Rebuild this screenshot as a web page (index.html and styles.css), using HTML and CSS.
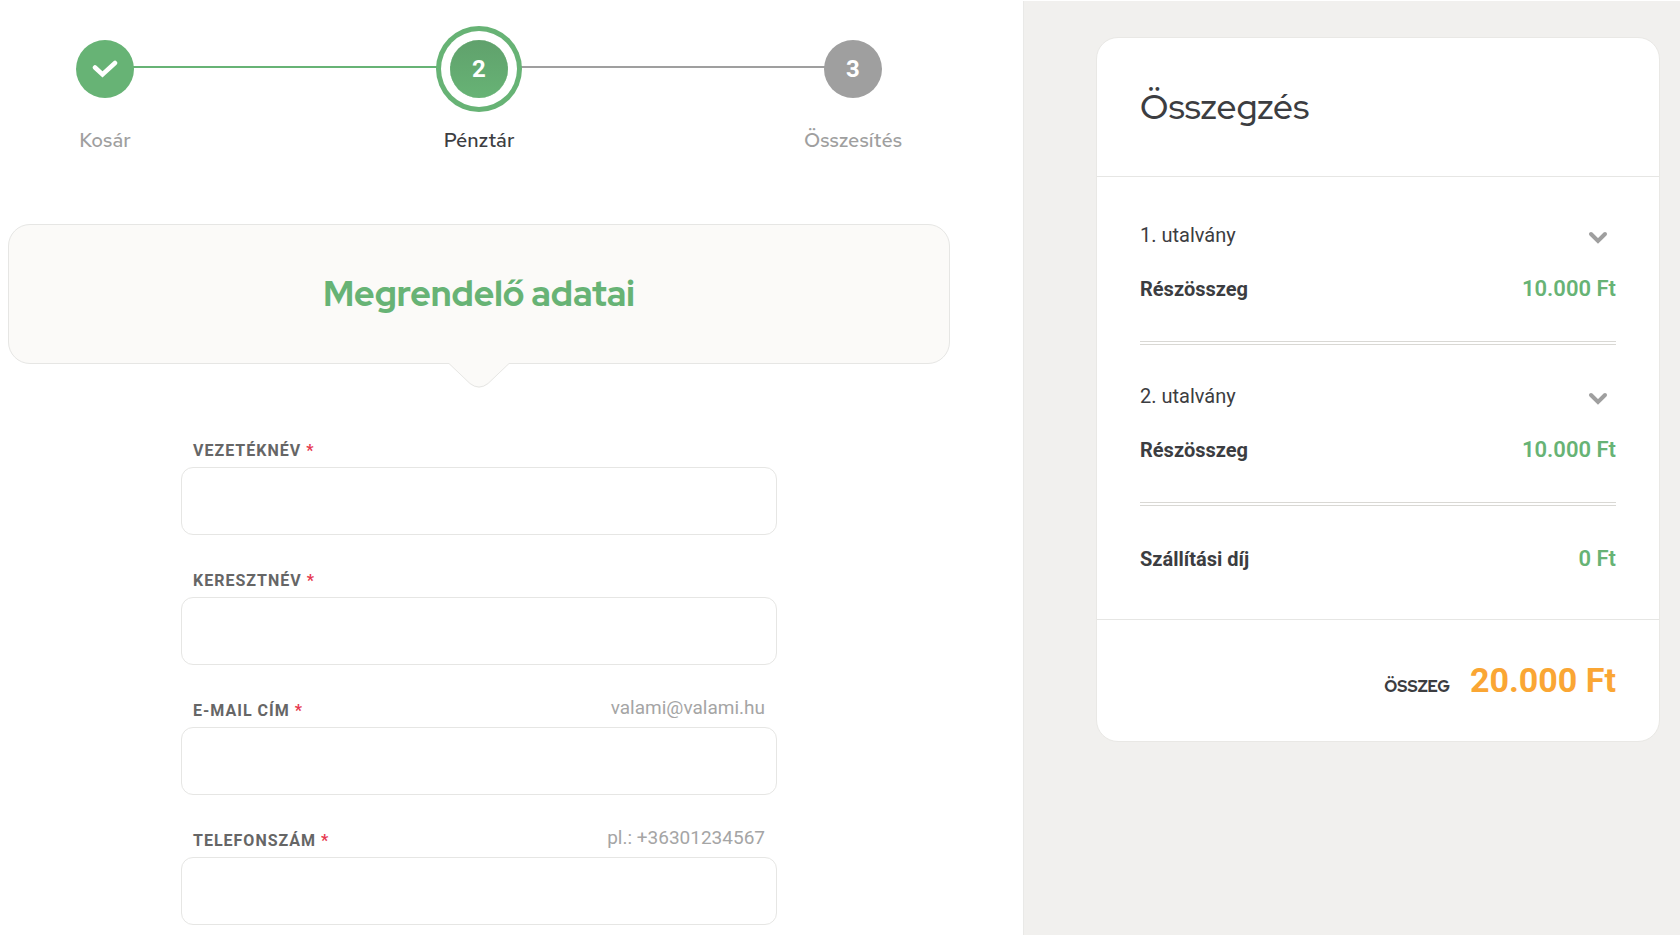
FILE: index.html
```html
<!DOCTYPE html>
<html lang="hu">
<head>
<meta charset="utf-8">
<meta name="viewport" content="width=device-width, initial-scale=1">
<title>Pénztár</title>
<link rel="stylesheet" href="styles.css">
</head>
<body>
<div class="page">
  <main class="checkout">
    <ol class="steps">
      <li class="step step-done">
        <span class="step-dot">
          <svg width="26" height="18" viewBox="0 0 26 18" fill="none" stroke="currentColor" stroke-width="4.500" stroke-linecap="round" stroke-linejoin="miter" aria-label="Kész"><path d="M3 7.500l7.500 7L23 3"/></svg>
        </span>
        <span class="step-label">Kosár</span>
      </li>
      <li class="step-line step-line-done" role="presentation"></li>
      <li class="step step-current" aria-current="step">
        <span class="step-dot">2</span>
        <span class="step-label">Pénztár</span>
      </li>
      <li class="step-line" role="presentation"></li>
      <li class="step">
        <span class="step-dot">3</span>
        <span class="step-label">Összesítés</span>
      </li>
    </ol>

    <header class="banner">
      <h1 class="banner-title">Megrendelő adatai</h1>
      <svg class="banner-arrow" width="60" height="26" viewBox="0 0 60 26" aria-hidden="true"><path class="arrow-fill" d="M0 0H60V1L38 22Q30 28 22 22L0 1Z"/><path class="arrow-edge" d="M0 0.500L21 20.500Q30 27.500 39 20.500L60 0.500"/></svg>
    </header>

    <form class="form">
      <div class="field">
        <div class="field-head"><label class="field-label" for="last">VEZETÉKNÉV <span class="required">*</span></label></div>
        <input class="field-input" id="last" type="text">
      </div>
      <div class="field">
        <div class="field-head"><label class="field-label" for="first">KERESZTNÉV <span class="required">*</span></label></div>
        <input class="field-input" id="first" type="text">
      </div>
      <div class="field">
        <div class="field-head"><label class="field-label" for="email">E-MAIL CÍM <span class="required">*</span></label><span class="field-hint" id="email-hint">valami@valami.hu</span></div>
        <input class="field-input" id="email" type="email" aria-describedby="email-hint">
      </div>
      <div class="field">
        <div class="field-head"><label class="field-label" for="phone">TELEFONSZÁM <span class="required">*</span></label><span class="field-hint" id="phone-hint">pl.: +36301234567</span></div>
        <input class="field-input" id="phone" type="tel" aria-describedby="phone-hint">
      </div>
    </form>
  </main>

  <aside class="sidebar">
    <section class="summary">
      <h2 class="summary-title">Összegzés</h2>
      <div class="summary-body">
        <div class="item">
          <div class="row"><span>1. utalvány</span>
            <button class="toggle" type="button" aria-label="1. utalvány részletei"><svg width="20" height="14" viewBox="0 0 20 14" fill="none" stroke="currentColor" stroke-width="4" stroke-linecap="round"><path d="M3 3l7 7 7-7"/></svg></button></div>
          <div class="row"><strong class="name">Részösszeg</strong><span class="price">10.000 Ft</span></div>
        </div>
        <div class="item">
          <div class="row"><span>2. utalvány</span>
            <button class="toggle" type="button" aria-label="2. utalvány részletei"><svg width="20" height="14" viewBox="0 0 20 14" fill="none" stroke="currentColor" stroke-width="4" stroke-linecap="round"><path d="M3 3l7 7 7-7"/></svg></button></div>
          <div class="row"><strong class="name">Részösszeg</strong><span class="price">10.000 Ft</span></div>
        </div>
        <div class="row shipping"><strong class="name">Szállítási díj</strong><span class="price">0 Ft</span></div>
      </div>
      <div class="total"><span class="total-label">ÖSSZEG</span><strong class="total-price">20.000 Ft</strong></div>
    </section>
  </aside>
</div>
</body>
</html>
```
FILE: styles.css
```css
:root {
  --green: #67b375;
  --gray: #9f9f9f;
  --ink: #3c3d41;
  --line: #e6e6e4;
  --display: "Red Hat Display", Inter, sans-serif;
}

* { box-sizing: border-box; }

body {
  margin: 0;
  background: #fff;
  color: var(--ink);
  font-family: Roboto, sans-serif;
  font-size: 20px;
}

.page {
  display: grid;
  grid-template-columns: 1023fr 657fr;
  min-height: 100vh;
  padding: 1px 0 2px;
}

.checkout { padding: 39px 73px 0 8px; }

.steps {
  display: flex;
  margin: 0;
  padding: 0 37px;
  list-style: none;
}

.step {
  position: relative;
  z-index: 1;
  flex: none;
  width: 120px;
  display: flex;
  flex-direction: column;
  align-items: center;
  gap: 30px;
  color: var(--gray);
}

.step-dot {
  display: flex;
  align-items: center;
  justify-content: center;
  width: 58px;
  height: 58px;
  border-radius: 50%;
  background: var(--gray);
  color: #fff;
  font-size: 24px;
  font-weight: 700;
}

.step-done .step-dot { background: var(--green); }

.step-current .step-dot {
  background: linear-gradient(#60a16c, #67b375);
  box-shadow: 0 0 0 9px #fff, 0 0 0 14px var(--green);
}

.step-label {
  font-family: "Red Hat Text", "Red Hat Display", Inter, sans-serif;
  font-size: 20px;
  font-weight: 500;
  line-height: 24px;
}

.step-current .step-label { color: var(--ink); }

.step-line {
  flex: 1;
  height: 2px;
  margin: 26px -32px 0;
  background: var(--gray);
}

.step-line-done { background: var(--green); }

.banner {
  position: relative;
  margin-top: 72px;
  padding: 48px 24px;
  border: 1px solid var(--line);
  border-radius: 22px;
  background: #fbfaf8;
  text-align: center;
}

.banner-title {
  margin: 0;
  color: var(--green);
  font-family: var(--display);
  font-size: 35px;
  font-weight: 800;
  line-height: 42px;
}

.banner-arrow {
  position: absolute;
  top: 100%;
  left: 50%;
  margin-left: -30px;
}

.arrow-fill { fill: #fbfaf8; }
.arrow-edge { fill: none; stroke: var(--line); }

.form {
  width: 596px;
  max-width: 100%;
  margin: 71px auto 0;
  display: grid;
  gap: 30px;
}

.field-head {
  display: flex;
  align-items: center;
  justify-content: space-between;
  height: 32px;
  padding: 0 12px 2px;
}

.field-label {
  color: #666;
  font-size: 16px;
  font-weight: 700;
  letter-spacing: 1px;
}

.required { color: #e63950; }

.field-hint {
  color: #a5a5a5;
  font-size: 19px;
  line-height: 24px;
  padding-bottom: 4px;
}

.field-input {
  display: block;
  width: 100%;
  height: 68px;
  padding: 0 20px;
  border: 1px solid var(--line);
  border-radius: 12px;
  background: #fff;
  font: inherit;
}

.sidebar {
  padding: 36px 20px 36px 72px;
  border-left: 1px solid #e9e9e7;
  background: #f1f0ee;
}

.summary {
  border: 1px solid #e9e8e5;
  border-radius: 22px;
  background: #fff;
}

.summary-title {
  margin: 0;
  padding: 46px 43px;
  border-bottom: 1px solid var(--line);
  font-family: var(--display);
  font-size: 35px;
  font-weight: 500;
  line-height: 46px;
}

.summary-body { padding: 46px 43px 48px; }

.row {
  display: flex;
  align-items: center;
  justify-content: space-between;
  line-height: 24px;
}

.item {
  display: grid;
  gap: 30px;
  margin-bottom: 39px;
  padding-bottom: 40px;
  border-bottom: 4px double #d9d8d4;
}

.shipping { padding-top: 2px; }

.toggle {
  display: flex;
  margin: 0 8px;
  padding: 5px 0 0;
  border: 0;
  background: none;
  color: var(--gray);
}

.name { font-weight: 700; }

.price {
  color: var(--green);
  font-size: 22px;
  font-weight: 600;
}

.total {
  display: flex;
  align-items: baseline;
  justify-content: flex-end;
  gap: 20px;
  padding: 37px 43px 38px;
  border-top: 1px solid var(--line);
}

.total-label {
  font-family: var(--display);
  font-size: 16px;
  font-weight: 800;
}

.total-price {
  color: #faa634;
  font-size: 34px;
  font-weight: 700;
  line-height: 46px;
}
```
